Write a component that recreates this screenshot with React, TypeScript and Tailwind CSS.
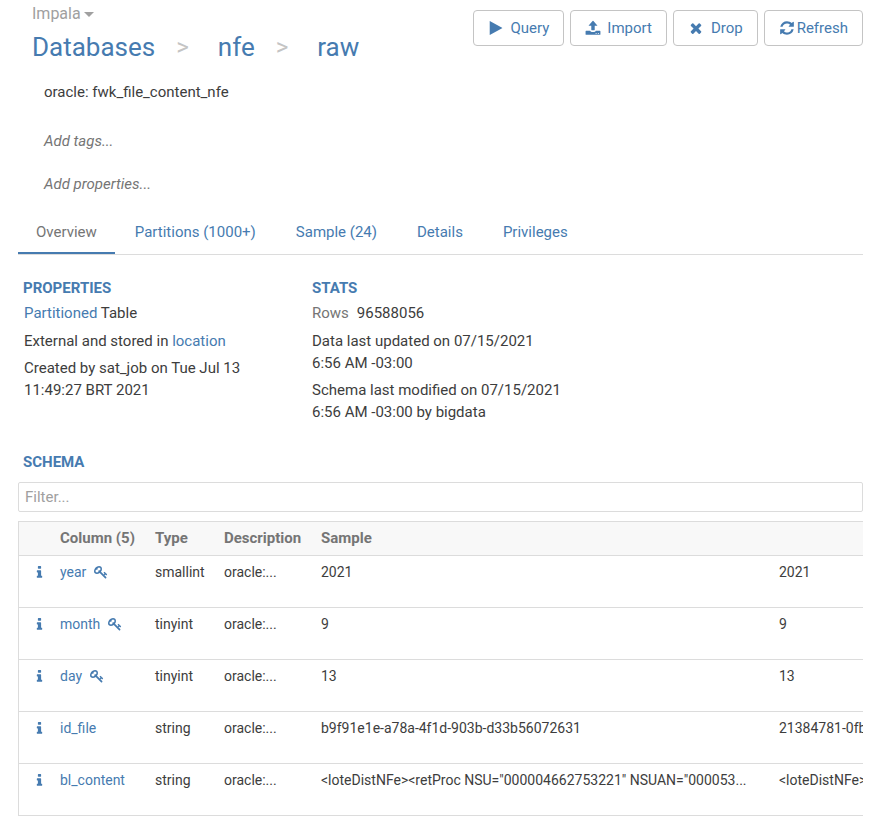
import React from "react";

const ICONS = {
  play: "M1576 927l-1328 738q-23 13-39.5 3t-16.5-36v-1472q0-26 16.5-36t39.5 3l1328 738q23 13 23 31t-23 31z",
  times:
    "M1490 1322q0 40-28 68l-136 136q-28 28-68 28t-68-28l-294-294-294 294q-28 28-68 28t-68-28l-136-136q-28-28-28-68t28-68l294-294-294-294q-28-28-28-68t28-68l136-136q28-28 68-28t68 28l294 294 294-294q28-28 68-28t68 28l136 136q28 28 28 68t-28 68l-294 294 294 294q28 28 28 68z",
  refresh:
    "M1639 1056q0 5-1 7-64 268-268 434.5t-478 166.5q-146 0-282.5-55t-243.5-157l-129 129q-19 19-45 19t-45-19-19-45v-448q0-26 19-45t45-19h448q26 0 45 19t19 45-19 45l-137 137q71 66 161 102t187 36q134 0 250-65t186-179q11-17 53-117 8-23 30-23h192q13 0 22.5 9.5t9.5 22.5zm25-800v448q0 26-19 45t-45 19h-448q-26 0-45-19t-19-45 19-45l138-138q-148-137-349-137-134 0-250 65t-186 179q-11 17-53 117-8 23-30 23h-199q-13 0-22.5-9.5t-9.5-22.5v-7q65-268 270-434.5t480-166.5q146 0 284 55.5t245 156.5l130-129q19-19 45-19t45 19 19 45z",
  info: "M1216 1344v128q0 26-19 45t-45 19h-512q-26 0-45-19t-19-45v-128q0-26 19-45t45-19h64v-384h-64q-26 0-45-19t-19-45v-128q0-26 19-45t45-19h384q26 0 45 19t19 45v576h64q26 0 45 19t19 45zm-128-1152v192q0 26-19 45t-45 19h-256q-26 0-45-19t-19-45v-192q0-26 19-45t45-19h256q26 0 45 19t19 45z",
  key: "M832 512q0-80-56-136t-136-56-136 56-56 136q0 42 19 83-41-19-83-19-80 0-136 56t-56 136 56 136 136 56 136-56 56-136q0-42-19-83 41 19 83 19 80 0 136-56t56-136zm851 704q0 17-49 66t-66 49q-9 0-28.5-16t-36.5-33-38.5-40-24.5-26l-96 96 220 220q28 28 28 68 0 42-39 81t-81 39q-40 0-68-28l-671-671q-176 131-365 131-163 0-265.5-102.5t-102.5-265.5q0-160 95-313t248-248 313-95q163 0 265.5 102.5t102.5 265.5q0 189-131 365l355 355 96-96q-3-3-26-24.5t-40-38.5-33-36.5-16-28.5q0-17 49-66t66-49q13 0 23 10 6 6 46 44.5t82 79.5 86.5 86 73 78 28.5 41z",
  upload:
    "M704 1088v-448h-272q-40 0-20-34l436-490q48-48 96 0l436 490q20 34-20 34h-272v448q0 48-48 48h-288q-48 0-48-48zM64 1280q0-64 64-64h448q32 128 176 128h288q144 0 176-128h448q64 0 64 64v320q0 64-64 64h-1536q-64 0-64-64zM1184 1456v96h128v-96zM1440 1456v96h128v-96z",
};

function Icon({ name, className }: { name: keyof typeof ICONS; className: string }) {
  return (
    <svg viewBox="0 0 1792 1792" fill="currentColor" fillRule={name === "upload" ? "evenodd" : "nonzero"} aria-hidden="true" className={`shrink-0 ${className}`}>
      <path d={ICONS[name]} />
    </svg>
  );
}

function ActionButton({ children, className }: { children: React.ReactNode; className: string }) {
  return (
    <button type="button" className={`flex h-9 items-center rounded border border-[#c4c4c4] bg-white text-[15px] text-[#467bb0] ${className}`}>
      {children}
    </button>
  );
}

const TABS = ["Partitions (1000+)", "Sample (24)", "Details", "Privileges"];

const ROWS = [
  { name: "year", key: true, type: "smallint", samples: ["2021", "2021"] },
  { name: "month", key: true, type: "tinyint", samples: ["9", "9"] },
  { name: "day", key: true, type: "tinyint", samples: ["13", "13"] },
  { name: "id_file", key: false, type: "string", samples: ["b9f91e1e-a78a-4f1d-903b-d33b56072631", "21384781-0fb"] },
  {
    name: "bl_content",
    key: false,
    type: "string",
    samples: ['<loteDistNFe><retProc NSU="000004662753221" NSUAN="000053...', "<loteDistNFe>"],
  },
];

export default function App() {
  return (
    <main className="bg-white pr-[19px] pb-2.5 pl-[18px] font-[Roboto,sans-serif] text-[15px] leading-[22px] text-[#3d3d3d]">
      <header className="flex items-start justify-between pt-1">
        <div className="pl-3.5">
          <button type="button" className="flex h-5 items-center gap-[3px] text-base text-[#a0a0a0]">
            Impala
            <svg viewBox="0 0 10 5" fill="currentColor" className="h-[5px] w-[10px]" aria-hidden="true">
              <path d="M0 0h10L5 5z" />
            </svg>
          </button>
          <nav aria-label="Breadcrumb" className="mt-1.5 flex items-center text-[26px] leading-[34px] text-[#467bb0]">
            <a href="#databases">Databases</a>
            <span className="ml-[21px] text-2xl text-[#c4c4c4]">&gt;</span>
            <a href="#nfe" className="ml-[29px]">nfe</a>
            <span className="ml-[21px] text-2xl text-[#c4c4c4]">&gt;</span>
            <a href="#raw" className="ml-[29px]">raw</a>
          </nav>
        </div>
        <div className="mt-1.5 flex gap-1.5">
          <ActionButton className="gap-1.5 px-3.5">
            <Icon name="play" className="size-4" />
            Query
          </ActionButton>
          <ActionButton className="gap-1.5 px-3.5">
            <Icon name="upload" className="size-4" />
            Import
          </ActionButton>
          <ActionButton className="gap-[7px] px-3.5">
            <Icon name="times" className="size-4" />
            Drop
          </ActionButton>
          <ActionButton className="gap-0.5 px-3.5">
            <Icon name="refresh" className="size-4" />
            Refresh
          </ActionButton>
        </div>
      </header>

      <section className="pt-[17px] pl-[26px]">
        <p>oracle: fwk_file_content_nfe</p>
        <p className="mt-[27px] text-[#757575] italic">Add tags...</p>
        <p className="mt-[21px] text-[#757575] italic">Add properties...</p>
      </section>

      <div role="tablist" className="mt-4 flex h-[44px] border-b border-[#dcdcdc] text-[#467bb0]">
        <button type="button" role="tab" aria-selected="true" className="border-b-2 border-[#467bb0] px-[18px] text-[#757575]">
          Overview
        </button>
        {TABS.map((t) => (
          <button key={t} type="button" role="tab" aria-selected="false" className="border-b-2 border-transparent px-5">
            {t}
          </button>
        ))}
      </div>

      <div className="mt-[22px] flex pl-[5px]">
        <section className="w-[289px]">
          <h2 className="font-bold text-[#467bb0]">PROPERTIES</h2>
          <div className="mt-[3px] flex flex-col gap-[5px] pl-px">
            <p>
              <a href="#partitions" className="text-[#467bb0]">Partitioned</a> Table
            </p>
            <p className="pt-px">
              External and stored in <a href="#location" className="text-[#467bb0]">location</a>
            </p>
            <p>
              Created by sat_job on Tue Jul 13
              <br />
              11:49:27 BRT 2021
            </p>
          </div>
        </section>
        <section>
          <h2 className="font-bold text-[#467bb0]">STATS</h2>
          <div className="mt-[3px] flex flex-col gap-[5px]">
            <p>
              <span className="mr-2 text-[#757575]">Rows</span>96588056
            </p>
            <p className="pt-px">
              Data last updated on 07/15/2021
              <br />
              6:56 AM -03:00
            </p>
            <p>
              Schema last modified on 07/15/2021
              <br />
              6:56 AM -03:00 by bigdata
            </p>
          </div>
        </section>
      </div>

      <section className="mt-7">
        <h2 className="pl-[5px] font-bold text-[#467bb0]">SCHEMA</h2>
        <input
          type="text"
          aria-label="Filter columns"
          placeholder="Filter..."
          className="mt-[9px] block h-[30px] w-full rounded-xs border border-[#dcdcdc] px-1.5 placeholder:text-[#a0a0a0]"
        />
        <div className="mt-[9px] overflow-hidden border-l border-[#dcdcdc]">
          <table className="w-[1100px] table-fixed border-collapse text-left text-sm">
            <colgroup>
              <col className="w-[41px]" />
              <col className="w-[95px]" />
              <col className="w-[69px]" />
              <col className="w-[97px]" />
              <col className="w-[458px]" />
              <col />
            </colgroup>
            <thead>
              <tr className="h-[34px] border-y border-[#dcdcdc] bg-[#f8f8f8] text-[15px] text-[#757575]">
                <th />
                <th>Column (5)</th>
                <th>Type</th>
                <th>Description</th>
                <th>Sample</th>
                <th />
              </tr>
            </thead>
            <tbody>
              {ROWS.map((r) => (
                <tr key={r.name} className="h-[52px] border-b border-[#dcdcdc] align-top whitespace-nowrap">
                  <td className="pt-[9px] pl-[13px]">
                    <button type="button" aria-label={`Show details of ${r.name}`} className="block text-[#467bb0]">
                      <Icon name="info" className="size-[15px]" />
                    </button>
                  </td>
                  <td className="pt-1.5">
                    <a href={`#${r.name}`} className="flex items-center gap-2 text-[#467bb0]">
                      {r.name}
                      {r.key && <Icon name="key" className="size-[14px]" />}
                    </a>
                  </td>
                  <td className="pt-1.5">{r.type}</td>
                  <td className="pt-1.5">oracle:...</td>
                  {r.samples.map((s, i) => (
                    <td key={i} className="pt-1.5">{s}</td>
                  ))}
                </tr>
              ))}
            </tbody>
          </table>
        </div>
      </section>
    </main>
  );
}
